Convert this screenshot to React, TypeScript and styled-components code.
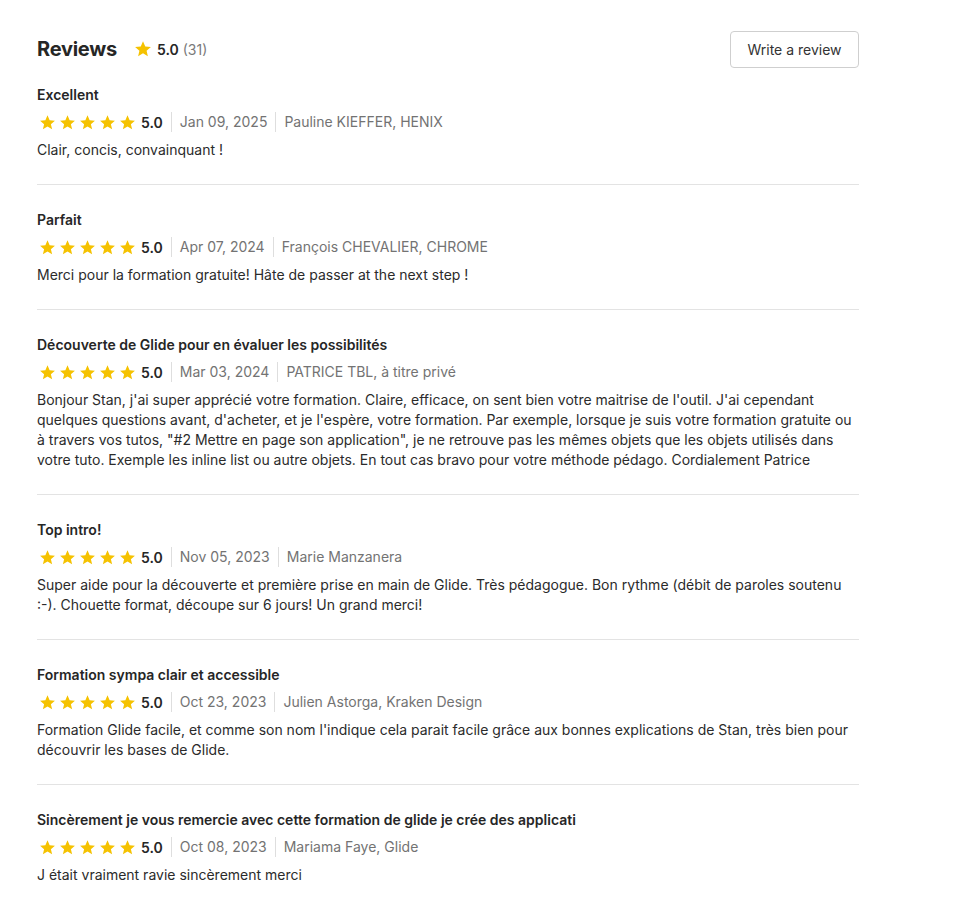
import React from "react";
import styled, { createGlobalStyle } from "styled-components";

const Global = createGlobalStyle`
  body { margin: 0; background: #fff; font-family: Inter, "Noto Sans", sans-serif; color: #1f1f1f; }
  * { box-sizing: border-box; }
`;

const Page = styled.div`
  width: 822px;
  margin-left: 37px;
  padding-top: 31px;
`;

const Header = styled.div`
  display: flex;
  align-items: center;
  justify-content: space-between;
  height: 36px;
  margin-bottom: 14px;
`;

const HeaderLeft = styled.div`
  display: flex;
  align-items: center;
  gap: 17px;
`;

const Title = styled.h2`
  margin: 0;
  font-size: 20px;
  font-weight: 700;
  color: #262626;
  letter-spacing: -0.25px;
`;

const Summary = styled.div`
  display: flex;
  align-items: center;
  gap: 5px;
  font-size: 14px;
`;

const Score = styled.span`
  font-weight: 600;
  color: #262626;
`;

const Count = styled.span`
  color: #7a7a7a;
  margin-left: -1px;
`;

const Button = styled.button`
  height: 37px;
  width: 129px;
  border: 1px solid #cfcfcf;
  border-radius: 4px;
  background: #fff;
  font-family: inherit;
  font-size: 14px;
  color: #333;
  cursor: pointer;
`;

const Review = styled.div<{ $last?: boolean }>`
  padding: 4px 0 ${(p) => (p.$last ? "8px" : "24px")};
  border-bottom: ${(p) => (p.$last ? "none" : "1px solid #e3e3e3")};
  & + & { padding-top: 25px; }
`;

const ReviewTitle = styled.div`
  font-size: 14px;
  font-weight: 600;
  line-height: 20px;
  color: #262626;
`;

const Meta = styled.div`
  display: flex;
  align-items: center;
  height: 20px;
  margin-top: 7px;
  font-size: 14px;
`;

const Stars = styled.div`
  display: flex;
  gap: 3px;
  margin-left: 2px;
  margin-right: 5px;
`;

const MetaScore = styled.span`
  font-weight: 600;
  color: #262626;
  padding-right: 8px;
`;

const MetaText = styled.span`
  color: #737373;
  padding: 0 8px;
  border-left: 1px solid #dedede;
  line-height: 20px;
`;

const Body = styled.p`
  margin: 8px 0 0;
  font-size: 14px;
  line-height: 20px;
  color: #2b2b2b;
`;

const Star = ({ size = 17 }: { size?: number }) => (
  <svg width={size} height={size} viewBox="0 0 24 24">
    <path
      fill="#f5c200"
      d="M12 17.6l6.5 4.1-1.7-7.4 5.7-4.9-7.5-.6L12 1.8 9 8.8l-7.5.6 5.7 4.9-1.7 7.4z"
    />
  </svg>
);

const reviews = [
  {
    title: "Excellent",
    date: "Jan 09, 2025",
    author: "Pauline KIEFFER, HENIX",
    text: "Clair, concis, convainquant !",
  },
  {
    title: "Parfait",
    date: "Apr 07, 2024",
    author: "François CHEVALIER, CHROME",
    text: "Merci pour la formation gratuite! Hâte de passer at the next step !",
  },
  {
    title: "Découverte de Glide pour en évaluer les possibilités",
    date: "Mar 03, 2024",
    author: "PATRICE TBL, à titre privé",
    text: "Bonjour Stan, j'ai super apprécié votre formation. Claire, efficace, on sent bien votre maitrise de l'outil. J'ai cependant quelques questions avant, d'acheter, et je l'espère, votre formation. Par exemple, lorsque je suis votre formation gratuite ou à travers vos tutos, \"#2 Mettre en page son application\", je ne retrouve pas les mêmes objets que les objets utilisés dans votre tuto. Exemple les inline list ou autre objets. En tout cas bravo pour votre méthode pédago. Cordialement Patrice",
  },
  {
    title: "Top intro!",
    date: "Nov 05, 2023",
    author: "Marie Manzanera",
    text: "Super aide pour la découverte et première prise en main de Glide. Très pédagogue. Bon rythme (débit de paroles soutenu :-). Chouette format, découpe sur 6 jours! Un grand merci!",
  },
  {
    title: "Formation sympa clair et accessible",
    date: "Oct 23, 2023",
    author: "Julien Astorga, Kraken Design",
    text: "Formation Glide facile, et comme son nom l'indique cela parait facile grâce aux bonnes explications de Stan, très bien pour découvrir les bases de Glide.",
  },
  {
    title: "Sincèrement je vous remercie avec cette formation de glide je crée des applicati",
    date: "Oct 08, 2023",
    author: "Mariama Faye, Glide",
    text: "J était vraiment ravie sincèrement merci",
  },
];

export default function App() {
  return (
    <>
      <Global />
      <Page>
        <Header>
          <HeaderLeft>
            <Title>Reviews</Title>
            <Summary>
              <Star size={18} />
              <Score>5.0</Score>
              <Count>(31)</Count>
            </Summary>
          </HeaderLeft>
          <Button>Write a review</Button>
        </Header>
        {reviews.map((r, i) => (
          <Review key={i} $last={i === reviews.length - 1}>
            <ReviewTitle>{r.title}</ReviewTitle>
            <Meta>
              <Stars>
                {[0, 1, 2, 3, 4].map((s) => (
                  <Star key={s} />
                ))}
              </Stars>
              <MetaScore>5.0</MetaScore>
              <MetaText>{r.date}</MetaText>
              <MetaText>{r.author}</MetaText>
            </Meta>
            <Body>{r.text}</Body>
          </Review>
        ))}
      </Page>
    </>
  );
}
